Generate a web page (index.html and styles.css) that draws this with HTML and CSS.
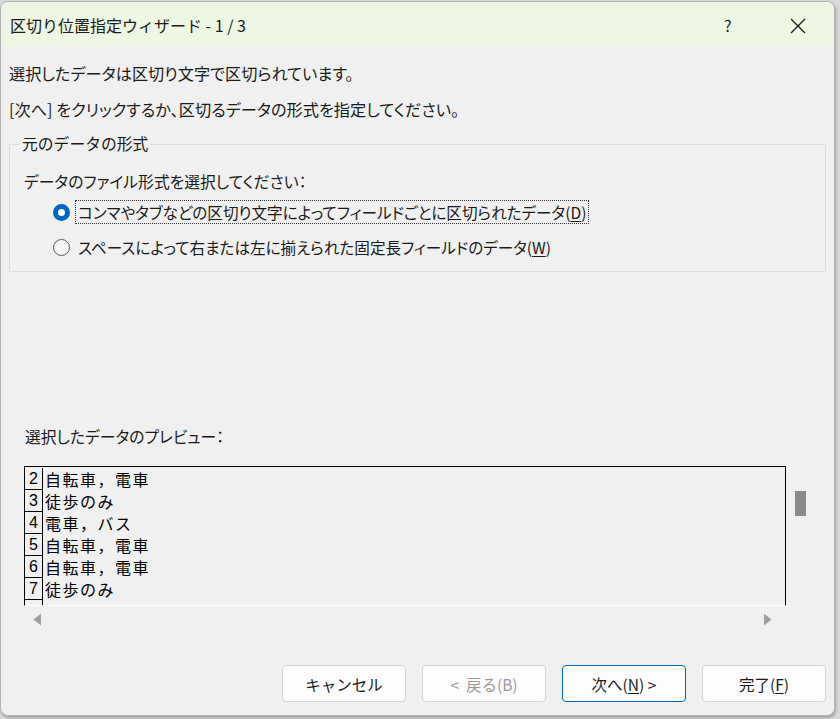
FILE: index.html
```html
<!DOCTYPE html>
<html lang="ja">
<head>
<meta charset="utf-8">
<title>区切り位置指定ウィザード</title>
<link rel="stylesheet" href="styles.css">
</head>
<body>
<div class="dialog">
  <div class="titlebar">
    <span class="title">区切り位置指定ウィザード - 1 / 3</span>
    <span class="help">?</span>
    <span class="close"><svg width="16" height="16" viewBox="0 0 16 16"><path d="M1 1 L15 15 M15 1 L1 15" stroke="#1a1a1a" stroke-width="1.3" fill="none"/></svg></span>
  </div>
  <div class="body">
    <p class="line l1">選択したデータは区切り文字で区切られています。</p>
    <p class="line l2">[次へ] をクリックするか、区切るデータの形式を指定してください。</p>
    <fieldset class="group">
      <legend>元のデータの形式</legend>
      <div class="prompt">データのファイル形式を選択してください：</div>
      <div class="radio r1"><span class="dot checked"></span><span class="rlabel focus">コンマやタブなどの区切り文字によってフィールドごとに区切られたデータ(<u>D</u>)</span></div>
      <div class="radio r2"><span class="dot"></span><span class="rlabel">スペースによって右または左に揃えられた固定長フィールドのデータ(<u>W</u>)</span></div>
    </fieldset>
    <div class="preview-label">選択したデータのプレビュー：</div>
    <div class="preview">
      <div class="pane-row">
        <div class="pane">
          <div class="row"><span class="num">2</span><span class="cell">自転車，電車</span></div>
          <div class="row"><span class="num">3</span><span class="cell">徒歩のみ</span></div>
          <div class="row"><span class="num">4</span><span class="cell">電車，バス</span></div>
          <div class="row"><span class="num">5</span><span class="cell">自転車，電車</span></div>
          <div class="row"><span class="num">6</span><span class="cell">自転車，電車</span></div>
          <div class="row"><span class="num">7</span><span class="cell">徒歩のみ</span></div>
          <div class="row"><span class="num"></span><span class="cell"></span></div>
        </div>
        <div class="vscroll"><div class="thumb"></div></div>
      </div>
      <div class="hscroll">
        <svg class="arr" width="9" height="13" viewBox="0 0 9 13"><path d="M8 0.5 L8 12.5 L0.5 6.5 Z" fill="#a0a0a0"/></svg>
        <svg class="arr" width="9" height="13" viewBox="0 0 9 13"><path d="M1 0.5 L1 12.5 L8.5 6.5 Z" fill="#a0a0a0"/></svg>
      </div>
    </div>
    <div class="buttons">
      <button class="btn">キャンセル</button>
      <button class="btn disabled">&lt;&nbsp; 戻る(B)</button>
      <button class="btn primary">次へ(<u>N</u>) &gt;</button>
      <button class="btn">完了(<u>F</u>)</button>
    </div>
  </div>
</div>
</body>
</html>
```
FILE: styles.css
```css
* { box-sizing: border-box; }
html, body { margin: 0; padding: 0; }
body {
  width: 840px;
  height: 719px;
  overflow: hidden;
  background: #d8d8d8;
  font-family: "Noto Sans CJK JP", "Noto Sans", sans-serif;
  color: #1a1a1a;
  font-size: 15px;
}
.dialog {
  margin-top: 1px;
  width: 835px;
  height: 715px;
  border: 1px solid #b4b4b4;
  border-radius: 8px;
  background: #f0f0f0;
  overflow: hidden;
  box-shadow: 1px 2px 3px rgba(0,0,0,0.25);
  display: flex;
  flex-direction: column;
}
.titlebar {
  height: 45px;
  flex: none;
  background: #eef6e4;
  display: flex;
  align-items: center;
  padding-left: 9px;
}
.title { font-size: 16px; flex: 1; }
.help { font-size: 16px; width: 66px; color: #222; }
.close { width: 44px; display: flex; align-items: center; padding-top: 2px; }
.body { flex: 1; display: flex; flex-direction: column; }
.line { margin: 0; padding-left: 8px; line-height: 24px; font-size: 16.2px; font-feature-settings: "palt"; }
.l1 { margin-top: 14px; }
.l2 { margin-top: 12px; }
.group {
  margin: 12px 8px 0 8px;
  padding: 0 0 12px 14px;
  border: 1px solid #dcdcdc;
  min-width: 0;
}
.group legend {
  margin-left: -4px;
  padding: 0 2px;
  line-height: 22px;
  font-size: 15.8px;
}
.prompt { margin-top: 15px; line-height: 24px; font-size: 15.8px; font-feature-settings: "palt"; }
.radio { display: flex; align-items: center; height: 24px; margin-left: 29px; font-size: 15.6px; font-feature-settings: "palt"; }
.r1 { margin-top: 6px; }
.r2 { margin-top: 11px; }
.dot {
  width: 17px; height: 17px; border-radius: 50%;
  border: 1px solid #5c5c5c;
  background: #f6f6f6;
  flex: none;
  margin-right: 5px;
}
.dot.checked {
  border: 5px solid #0067c0;
  background: #ffffff;
}
.rlabel { padding: 0 2px; line-height: 22px; border: 1px dotted transparent; }
.rlabel.focus { border-color: #333; }
u { text-decoration-thickness: 1px; text-underline-offset: 2px; }
.preview-label { margin-top: 153px; padding-left: 24px; line-height: 24px; font-size: 15.8px; font-feature-settings: "palt"; }
.preview { margin-top: 17px; }
.pane-row { display: flex; }
.pane {
  margin-left: 23px;
  width: 762px;
  height: 140px;
  border: 1px solid #000;
  border-bottom: 1px solid #ffffff;
  overflow: hidden;
  padding-top: 1px;
}
.row { display: flex; height: 22px; line-height: 22px; font-size: 16px; color: #000; }
.num {
  width: 18px; flex: none;
  border-right: 1px solid #000;
  border-bottom: 1px solid #000;
  text-align: center;
  font-family: "Liberation Sans", sans-serif;
  font-size: 16px;
  line-height: 21px;
}
.cell { padding-left: 2px; letter-spacing: 1.5px; }
.vscroll { width: 36px; padding: 25px 0 0 9px; }
.thumb { width: 11px; height: 25px; background: #8a8a8a; }
.hscroll { height: 27px; display: flex; justify-content: space-between; align-items: center; padding: 0 62px 0 32px; }
.buttons {
  margin-top: 32px;
  display: flex;
  justify-content: flex-end;
  gap: 16px;
  padding-right: 8px;
}
.btn {
  width: 124px; height: 37px;
  background: #fdfdfd;
  border: 1px solid #d4d4d4;
  border-radius: 4px;
  font-family: "Noto Sans CJK JP", "Noto Sans", sans-serif;
  font-size: 15.5px;
  color: #1a1a1a;
  padding: 0;
}
.btn.disabled { color: #9a9a9a; }
.btn.primary { border-color: #0067c0; }
```
